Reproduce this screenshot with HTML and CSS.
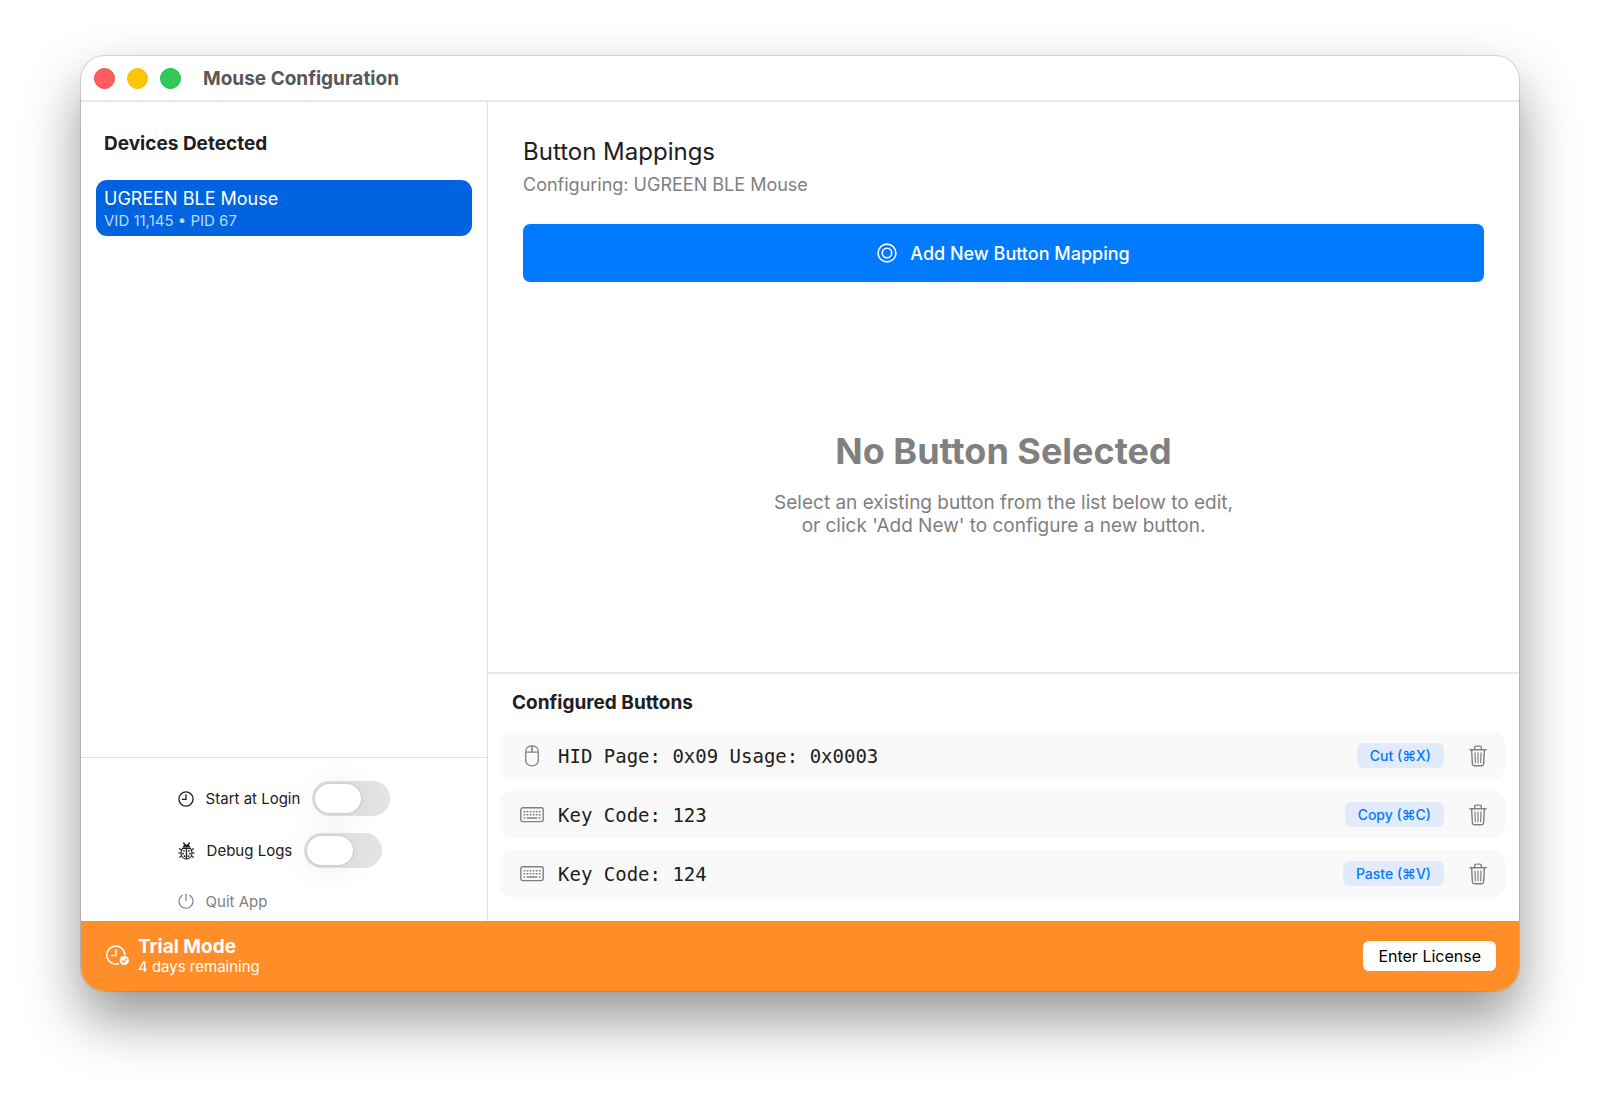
FILE: index.html
```html
<!DOCTYPE html>
<html lang="en">
<head>
    <meta charset="UTF-8">
    <title>Mouse Configuration</title>
    <link rel="stylesheet" href="styles.css">
</head>
<body>
    <!-- shared icons -->
    <svg class="sprite" aria-hidden="true">
        <symbol id="icon-keyboard" viewBox="0 0 24 16">
            <rect x="0.8" y="0.8" width="22.4" height="13.8" rx="2" fill="none" stroke="currentColor" stroke-width="1.4"/>
            <path d="M3.6 4.7h17M3.6 7.7h17" stroke="currentColor" stroke-width="1.6" stroke-dasharray="1.7 1.36" fill="none"/>
            <path d="M3.6 10.9h1.7M6.8 10.9h10.4M18.8 10.9h1.7" stroke="currentColor" stroke-width="1.5" fill="none"/>
        </symbol>
        <symbol id="icon-trash" viewBox="0 0 18 22">
            <g fill="none" stroke="currentColor" stroke-width="1.4" stroke-linecap="round" stroke-linejoin="round">
                <path d="M0.9 4.7h16.2"/>
                <path d="M5.7 4.5V2.6c0-.9.6-1.5 1.5-1.5h3.6c.9 0 1.5.6 1.5 1.5v1.9"/>
                <path d="M2.6 4.9l.8 14.1c.1 1.1.8 1.8 1.9 1.8h7.4c1.1 0 1.8-.7 1.9-1.8l.8-14.1"/>
                <path d="M6 7.9l.3 9.8M9 7.9v9.8M12 7.9l-.3 9.8" stroke-width="1.2"/>
            </g>
        </symbol>
    </svg>

    <div class="window">
        <header class="titlebar">
            <button class="light close" aria-label="Close"></button>
            <button class="light minimize" aria-label="Minimize"></button>
            <button class="light zoom" aria-label="Zoom"></button>
            <h1>Mouse Configuration</h1>
        </header>

        <div class="content">
            <aside class="sidebar">
                <div class="devices">
                    <h2>Devices Detected</h2>
                    <button class="device">
                        <span class="device-name">UGREEN BLE Mouse</span>
                        <span class="device-id">VID 11,145 • PID 67</span>
                    </button>
                </div>

                <div class="settings">
                    <div class="settings-list">
                        <div class="setting">
                            <svg width="16" height="16" viewBox="0 0 16 16" fill="none" stroke="currentColor" stroke-width="1.3" stroke-linecap="round">
                                <circle cx="8" cy="8" r="7.1"/>
                                <path d="M8 3.7V8.4H4.4"/>
                            </svg>
                            <label for="startAtLogin">Start at Login</label>
                            <input type="checkbox" class="toggle" id="startAtLogin">
                        </div>
                        <div class="setting">
                            <svg width="17" height="18" viewBox="0 0 17 18" fill="none" stroke="currentColor" stroke-linecap="round">
                                <path d="M4.6 5.4C4.8 3.4 6.3 2.400 8.500 2.400s3.700 1 3.900 3z" fill="currentColor" stroke="none"/>
                                <path d="M7.200 3L5.600 1M9.800 3L11.400 1" stroke-width="1.300"/>
                                <path d="M3 7.800L1.500 6.600M14 7.800l1.500-1.200M2.500 11H0.800M14.500 11h1.700M3.400 14L1.700 15.200M13.600 14l1.700 1.200" stroke-width="1.200"/>
                                <path d="M4.700 6.400h7.600c1.100 1.200 1.700 2.700 1.700 4.400 0 3.500-2.200 6.200-5.500 6.200S3 14.300 3 10.800c0-1.700.6-3.200 1.700-4.400z" stroke-width="1.200"/>
                                <path d="M8.500 6.500v10" stroke-width="1.300"/>
                                <g fill="currentColor" stroke="none">
                                    <circle cx="6" cy="8.800" r="0.900"/><circle cx="11" cy="8.800" r="0.900"/>
                                    <circle cx="5.100" cy="11.700" r="0.900"/><circle cx="11.900" cy="11.700" r="0.900"/>
                                    <circle cx="6.600" cy="14.200" r="0.900"/><circle cx="10.400" cy="14.200" r="0.900"/>
                                </g>
                            </svg>
                            <label for="debugLogs">Debug Logs</label>
                            <input type="checkbox" class="toggle" id="debugLogs">
                        </div>
                        <button class="setting quit">
                            <svg width="16" height="16" viewBox="0 0 16 16" fill="none" stroke="currentColor" stroke-width="1.2" stroke-linecap="round">
                                <path d="M8 1v6.500"/>
                                <path d="M4.300 2.300a7 7 0 1 0 7.400 0"/>
                            </svg>
                            Quit App
                        </button>
                    </div>
                </div>
            </aside>

            <main class="main">
                <section class="mappings">
                    <h2>Button Mappings</h2>
                    <p class="subtitle">Configuring: UGREEN BLE Mouse</p>
                    <button class="add-button">
                        <svg width="20" height="20" viewBox="0 0 20 20" fill="none" stroke="currentColor" stroke-width="1.6">
                            <circle cx="10" cy="10" r="8.900"/>
                            <circle cx="10" cy="10" r="4.700"/>
                        </svg>
                        Add New Button Mapping
                    </button>
                    <div class="empty">
                        <h3>No Button Selected</h3>
                        <p>Select an existing button from the list below to edit,<br>or click 'Add New' to configure a new button.</p>
                    </div>
                </section>

                <section class="configured">
                    <h2>Configured Buttons</h2>
                    <ul>
                        <li>
                            <svg class="row-icon" width="24" height="22" viewBox="0 0 24 22" fill="none" stroke="currentColor" stroke-width="1.3">
                                <rect x="5.700" y="1" width="12.600" height="19.800" rx="5.600"/>
                                <path d="M5.700 7.200h12.600M12 1v6.200"/>
                                <rect x="11.300" y="3" width="1.400" height="3" rx="0.700" fill="currentColor" stroke="none"/>
                            </svg>
                            <span class="code">HID Page: 0x09 Usage: 0x0003</span>
                            <span class="badge">Cut (⌘X)</span>
                            <button class="delete" aria-label="Delete"><svg width="18" height="22"><use href="#icon-trash"/></svg></button>
                        </li>
                        <li>
                            <svg class="row-icon" width="24" height="16"><use href="#icon-keyboard"/></svg>
                            <span class="code">Key Code: 123</span>
                            <span class="badge">Copy (⌘C)</span>
                            <button class="delete" aria-label="Delete"><svg width="18" height="22"><use href="#icon-trash"/></svg></button>
                        </li>
                        <li>
                            <svg class="row-icon" width="24" height="16"><use href="#icon-keyboard"/></svg>
                            <span class="code">Key Code: 124</span>
                            <span class="badge">Paste (⌘V)</span>
                            <button class="delete" aria-label="Delete"><svg width="18" height="22"><use href="#icon-trash"/></svg></button>
                        </li>
                    </ul>
                </section>
            </main>
        </div>

        <footer class="trial">
            <svg width="24" height="22" viewBox="0 0 24 22" fill="none" stroke="currentColor" stroke-width="1.5" stroke-linecap="round">
                <path d="M12.500 18.700A9 9 0 1 1 18.800 9.600"/>
                <path d="M10 4.800V10.500H5.400"/>
                <circle cx="18.300" cy="15.500" r="4.600" fill="currentColor" stroke="none"/>
                <path d="M16.300 15.800l1.400 1.500 2.700-3.400" stroke="#ff8d28" stroke-width="1.200"/>
            </svg>
            <div class="trial-text">
                <strong>Trial Mode</strong>
                <span>4 days remaining</span>
            </div>
            <button class="license">Enter License</button>
        </footer>
    </div>
</body>
</html>
```

FILE: styles.css
```css
* {
    box-sizing: border-box;
}
body {
    margin: 0;
    min-height: 100vh;
    padding: 56px 81px 108px;
    display: flex;
    background: #fff;
    color: #202020;
    font-family: Inter, "Liberation Sans", sans-serif;
    font-size: 18px;
}
h1, h2, h3, p, ul {
    margin: 0;
    padding: 0;
}
button {
    border: none;
    padding: 0;
    background: none;
    color: inherit;
    font: inherit;
    cursor: pointer;
}
svg {
    display: block;
    flex-shrink: 0;
}
.sprite {
    position: absolute;
    width: 0;
    height: 0;
}

.window {
    flex: 1;
    display: flex;
    flex-direction: column;
    border-radius: 24px;
    background: #fff;
    overflow: hidden;
    box-shadow: 0 0 1px 1px rgba(0, 0, 0, 0.14), 0 28px 56px rgba(0, 0, 0, 0.42);
}
.titlebar {
    height: 46px;
    padding: 1px 13px 0;
    display: flex;
    align-items: center;
    border-bottom: 2px solid #e8e8e8;
}
.titlebar h1 {
    margin-left: 10px;
    color: #575757;
    font-size: 19px;
    font-weight: 700;
}
.light {
    width: 21px;
    height: 21px;
    margin-right: 12px;
    border-radius: 50%;
}
.close {
    background: #ff5d60;
    border: 1px solid #f24a50;
}
.minimize {
    background: #fac800;
    border: 1px solid #f0be00;
}
.zoom {
    background: #34c759;
    border: 1px solid #18ba42;
}
.content {
    flex: 1;
    display: flex;
}

/* Sidebar */
.sidebar {
    width: 407px;
    flex-shrink: 0;
    display: flex;
    flex-direction: column;
    border-right: 1px solid #e0e0e0;
}
.devices {
    flex: 1;
    padding: 30px 15px 16px;
}
.devices h2 {
    margin: 0 8px 24px;
    font-size: 19px;
    line-height: 24px;
    font-weight: 700;
}
.device {
    width: 100%;
    height: 56px;
    padding: 1px 8px 0;
    border-radius: 11px;
    background: #0064e1;
    color: #fff;
    text-align: left;
}
.device span {
    display: block;
}
.device-name {
    font-size: 18px;
    line-height: 24px;
}
.device-id {
    color: #bfd8f7;
    font-size: 15px;
    line-height: 20px;
}
.settings {
    padding: 23px 16px 4px;
    display: flex;
    justify-content: center;
    border-top: 1px solid #e0e0e0;
    font-size: 15px;
}
.settings-list {
    display: flex;
    flex-direction: column;
    align-items: flex-start;
    gap: 17px;
}
.setting {
    display: flex;
    align-items: center;
    gap: 12px;
}
.quit {
    height: 32px;
    color: #808080;
}
.toggle {
    appearance: none;
    width: 78px;
    height: 35px;
    margin: 0;
    padding: 3px;
    border-radius: 18px;
    background: #e3e3e3;
    cursor: pointer;
}
.toggle::before {
    content: "";
    display: block;
    width: 46px;
    height: 29px;
    border-radius: 15px;
    background: #fff;
    box-shadow: 0 0 3px rgba(0, 0, 0, 0.18), 0 2px 32px rgba(0, 0, 0, 0.08);
}
.toggle:checked {
    background: #007aff;
}
.toggle:checked::before {
    margin-left: auto;
}

/* Main area */
.main {
    flex: 1;
    display: flex;
    flex-direction: column;
}
.mappings {
    flex: 1;
    padding: 35px;
    display: flex;
    flex-direction: column;
}
.mappings h2 {
    font-size: 24px;
    line-height: 30px;
    font-weight: 400;
}
.subtitle {
    margin: 6px 0 27px;
    color: #808080;
    line-height: 24px;
}
.add-button {
    height: 58px;
    display: flex;
    align-items: center;
    justify-content: center;
    gap: 13px;
    border-radius: 7px;
    background: #007aff;
    color: #fff;
    font-weight: 500;
}
.empty {
    flex: 1;
    padding-top: 46px;
    display: flex;
    flex-direction: column;
    align-items: center;
    justify-content: center;
    gap: 17px;
    color: #808080;
    text-align: center;
}
.empty h3 {
    font-size: 36px;
    line-height: 46px;
    font-weight: 700;
}
.empty p {
    font-size: 19px;
    line-height: 23px;
}
.configured {
    padding: 17px 14px 24px 12px;
    border-top: 2px solid #e8e8e8;
}
.configured h2 {
    margin: 0 12px 17px;
    font-size: 19px;
    line-height: 24px;
    font-weight: 700;
}
.configured ul {
    display: flex;
    flex-direction: column;
    gap: 12px;
    list-style: none;
}
.configured li {
    height: 47px;
    padding: 0 18px 0 20px;
    display: flex;
    align-items: center;
    border-radius: 11px;
    background: #f9f9f9;
}
.row-icon {
    color: #808080;
}
.code {
    flex: 1;
    margin-left: 14px;
    font-family: "DejaVu Sans Mono", "Liberation Mono", monospace;
    font-size: 19px;
}
.badge {
    padding: 0 13px;
    border-radius: 6px;
    background: #e1ebfb;
    color: #007aff;
    font-size: 14px;
    line-height: 25px;
    font-weight: 500;
}
.delete {
    margin-left: 25px;
    color: #808080;
}

/* Trial bar */
.trial {
    height: 70px;
    padding: 0 23px 0 25px;
    display: flex;
    align-items: center;
    background: #ff8d28;
    color: #fff;
}
.trial-text {
    flex: 1;
    margin-left: 8px;
    display: flex;
    flex-direction: column;
}
.trial-text strong {
    font-size: 19px;
    line-height: 21px;
    font-weight: 700;
}
.trial-text span {
    font-size: 15px;
    line-height: 19px;
}
.license {
    height: 30px;
    padding: 0 15px;
    border-radius: 6px;
    background: #fff;
    color: #000;
    font-size: 16px;
}
```
